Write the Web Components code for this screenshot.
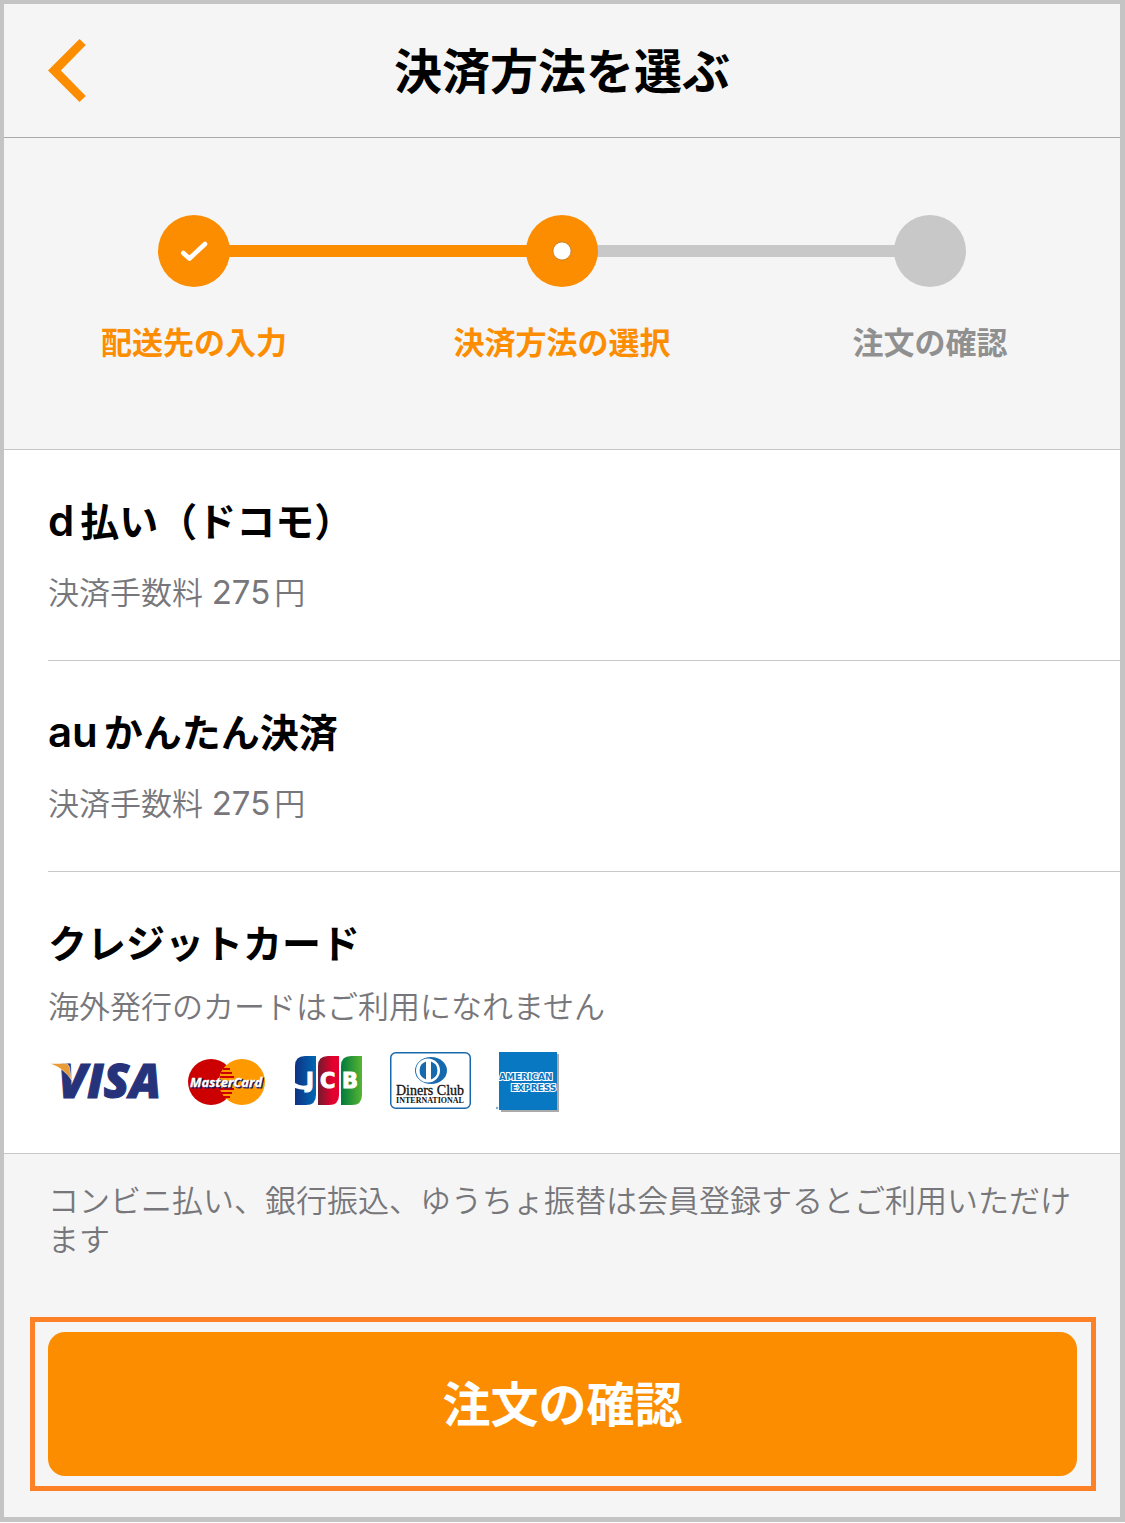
<!DOCTYPE html>
<html lang="ja">
<head>
<meta charset="utf-8">
<meta name="viewport" content="width=device-width, initial-scale=1">
<title>決済方法を選ぶ</title>
<style>
  :root {
    --accent: #fd8d00;
    --inactive: #c8c8c8;
    --surface: #f5f5f5;
    --line: #c8c8c8;
    --muted: #77777b;
  }

  body {
    margin: 0;
    background: #fff;
    color: #000;
    font-family: Inter, "Noto Sans CJK JP", sans-serif;
  }

  /* Latin runs are set a little larger than the kanji around them */
  .latin {
    margin-right: 6px;
    font-size: 42px;
    line-height: 1;
  }

  [slot="note"] .latin {
    margin-right: 4px;
    font-size: 33px;
    font-weight: 400;
  }
</style>
</head>
<body>

<checkout-page>
  <page-header slot="header" href="#back">決済方法を選ぶ</page-header>

  <step-list slot="steps">
    <step-item state="done">配送先の入力</step-item>
    <step-item state="current">決済方法の選択</step-item>
    <step-item state="todo">注文の確認</step-item>
  </step-list>

  <payment-method href="#dpay">
    <span class="latin">d</span>払い（ドコモ）
    <span slot="note">決済手数料 <span class="latin">275</span>円</span>
  </payment-method>
  <payment-method href="#au">
    <span class="latin">au</span>かんたん決済
    <span slot="note">決済手数料 <span class="latin">275</span>円</span>
  </payment-method>
  <payment-method href="#card" compact>
    クレジットカード
    <span slot="note">海外発行のカードはご利用になれません</span>
    <card-brands slot="brands"></card-brands>
  </payment-method>

  <span slot="hint">コンビニ払い、銀行振込、ゆうちょ振替は会員登録するとご利用いただけます</span>
  <submit-button slot="action">注文の確認</submit-button>
</checkout-page>

<template id="checkout-page">
  <style>
    :host {
      display: block;
      border: solid #c4c4c4;
      border-width: 4px 5px 5px 4px;
      background: var(--surface);
    }

    main {
      background: #fff;
      border: solid var(--line);
      border-width: 1px 0;
    }

    footer {
      padding: 27px 24px 26px 26px;
    }

    p {
      margin: 0 18px 58px;
      font-size: 31px;
      line-height: 39px;
      font-weight: 350;
      color: var(--muted);
    }
  </style>
  <slot name="header"></slot>
  <slot name="steps"></slot>
  <main><slot></slot></main>
  <footer>
    <p><slot name="hint"></slot></p>
    <slot name="action"></slot>
  </footer>
</template>

<template id="page-header">
  <style>
    :host {
      display: block;
      border-bottom: 1px solid #aaa;
    }

    header {
      display: grid;
      grid-template-columns: 40px 1fr 40px;
      align-items: center;
      height: 133px;
      padding: 0 43px;
    }

    a, svg {
      display: block;
    }

    h1 {
      margin: 0;
      padding-top: 2px;
      font-size: 48px;
      line-height: 64px;
      font-weight: 600;
      text-align: center;
    }
  </style>
  <header>
    <a aria-label="戻る">
      <svg width="40" height="64" viewBox="0 0 40 64">
        <path d="M1 31.500 32.500 0 38.800 6 13.800 31.500 38.800 57 32.500 63Z" fill="#fd8d00"/>
      </svg>
    </a>
    <h1><slot></slot></h1>
  </header>
</template>

<template id="step-list">
  <style>
    :host {
      display: grid;
      grid-template-columns: repeat(3, 1fr);
      padding: 77px 6px 86px;
    }
  </style>
  <slot></slot>
</template>

<template id="step-item">
  <style>
    :host {
      display: block;
      color: var(--accent);
    }

    :host([state="todo"]) {
      color: #909090;
    }

    .track {
      display: flex;
      align-items: center;
    }

    .track i {
      flex: 1;
      height: 12px;
      background: var(--accent);
    }

    .before {
      margin-right: -1px;
    }

    .after {
      margin-left: -1px;
    }

    :host(:first-child) .before,
    :host(:last-child) .after {
      visibility: hidden;
    }

    :host([state="current"]) .after,
    :host([state="todo"]) .before {
      background: var(--inactive);
    }

    .dot {
      display: grid;
      place-items: center;
      width: 72px;
      height: 72px;
      border-radius: 50%;
      background: var(--accent);
      z-index: 1;
    }

    :host([state="todo"]) .dot {
      background: var(--inactive);
    }

    svg {
      display: none;
    }

    :host([state="done"]) .check,
    :host([state="current"]) .bullet {
      display: block;
    }

    .label {
      margin-top: 36px;
      font-size: 31px;
      line-height: 40px;
      font-weight: 600;
      text-align: center;
    }
  </style>
  <div class="track">
    <i class="before"></i>
    <span class="dot">
      <svg class="check" width="28" height="22" viewBox="0 0 28 22">
        <path d="M3.300 13 9.500 18.500 25 4" fill="none" stroke="#fff" stroke-width="4.600" stroke-linecap="round" stroke-linejoin="round"/>
      </svg>
      <svg class="bullet" width="20" height="20" viewBox="0 0 20 20">
        <circle cx="10" cy="10" r="9" fill="#fff" stroke="#a96512" stroke-width=".6"/>
      </svg>
    </span>
    <i class="after"></i>
  </div>
  <div class="label"><slot></slot></div>
</template>

<template id="payment-method">
  <style>
    :host {
      display: block;
      margin-left: 44px;
      border-bottom: 1px solid var(--line);
    }

    :host([compact]) {
      border-bottom: 0;
    }

    a {
      display: block;
      padding: 48px 0 47px;
      color: inherit;
      text-decoration: none;
    }

    h2 {
      margin: 0 0 27px;
      font-size: 39px;
      line-height: 48px;
      font-weight: 600;
    }

    p {
      margin: 0;
      font-size: 31px;
      line-height: 40px;
      font-weight: 350;
      color: var(--muted);
    }

    :host([compact]) a {
      padding-bottom: 41px;
    }

    :host([compact]) h2 {
      margin-bottom: 19px;
    }
  </style>
  <a>
    <h2><slot></slot></h2>
    <p><slot name="note"></slot></p>
    <slot name="brands"></slot>
  </a>
</template>

<template id="card-brands">
  <style>
    :host {
      display: flex;
      gap: 28px;
      margin-top: 25px;
    }

    svg {
      display: block;
      overflow: visible;
    }
  </style>

  <svg width="112" height="60" viewBox="0 0 112 60" role="img" aria-label="VISA">
    <text x="10" y="46" font-family="Open Sans" font-size="47" font-weight="800" font-style="italic" fill="#26337a" stroke="#26337a">VISA</text>
    <path d="M2 11.500H17Q21 11.500 21.500 16L23.500 28Q17 17 2 11.500Z" fill="#e89a34" stroke="#fff" stroke-width=".5"/>
  </svg>

  <svg width="79" height="60" viewBox="0 0 79 60" role="img" aria-label="MasterCard">
    <circle cx="23" cy="30" r="23" fill="#c00"/>
    <circle cx="54" cy="30" r="23" fill="#f90"/>
    <path d="M38.500 13Q31 20 31 30T38.500 47Q46 40 46 30T38.500 13Z" fill="#f90"/>
    <path d="M35 17H42M33 21H44M32 25H46M32 37H46M33 41H44M35 45H42" stroke="#c00" stroke-width="2"/>
    <g font-family="Liberation Sans Narrow, Open Sans" font-size="13" font-weight="700" font-style="italic">
      <text x="3" y="36" fill="#1a1a5e" stroke="#1a1a5e" aria-hidden="true">MasterCard</text>
      <text x="2" y="35" fill="#fff" stroke="#fff" stroke-width=".3">MasterCard</text>
    </g>
  </svg>

  <svg width="67" height="60" viewBox="0 0 67 60" role="img" aria-label="JCB">
    <defs>
      <linearGradient id="blue"><stop stop-color="#0f3285"/><stop offset="1" stop-color="#0068b3"/></linearGradient>
      <linearGradient id="red"><stop stop-color="#701b2c"/><stop offset=".7" stop-color="#e4002f"/></linearGradient>
      <linearGradient id="green"><stop stop-color="#007b3d"/><stop offset="1" stop-color="#57b531"/></linearGradient>
    </defs>
    <path d="M10 4H21V43Q21 53 11 53H0V14Q0 4 10 4Z" fill="url(#blue)"/>
    <path d="M33 4H44V43Q44 53 34 53H23V14Q23 4 33 4Z" fill="url(#red)"/>
    <path d="M56 4H67V43Q67 53 57 53H46V14Q46 4 56 4Z" fill="url(#green)"/>
    <g font-family="DejaVu Sans" font-size="21" font-weight="700" fill="#fff" stroke="#fff">
      <text x="11" y="36">J</text>
      <text x="25" y="36">C</text>
      <text x="47" y="36">B</text>
    </g>
    <path d="M0 31Q6 35 13 33L15 37Q8 39 0 36Z" fill="#fff"/>
  </svg>

  <svg width="81" height="60" viewBox="0 0 81 60" role="img" aria-label="Diners Club International">
    <rect x=".75" y=".75" width="79.500" height="55.500" rx="5" fill="#fff" stroke="#1769ae" stroke-width="1.500"/>
    <ellipse cx="41" cy="18.500" rx="16" ry="13.500" fill="#1769ae"/>
    <circle cx="38" cy="18.500" r="12" fill="#fff"/>
    <path d="M36 9.500A9.500 9.500 0 0 0 36 27.500ZM41 9.500A9.500 9.500 0 0 1 41 27.500Z" fill="#1769ae"/>
    <g font-family="Liberation Serif" fill="#111" text-anchor="middle">
      <text x="40" y="43" font-size="14" stroke="#111" stroke-width=".3">Diners Club</text>
      <text x="40" y="51" font-size="8" font-weight="700">INTERNATIONAL</text>
    </g>
  </svg>

  <svg width="61" height="60" viewBox="0 0 61 60" role="img" aria-label="American Express">
    <path d="M2 2H60V60H2Z" fill="#aaa"/>
    <path d="M0 0H58V58H0Z" fill="#0878c3"/>
    <circle cx="-2" cy="56" r="1.200" fill="#7aaed4"/>
    <g font-family="DejaVu Sans" font-size="9" font-weight="700" fill="#0878c3" stroke="#fff" stroke-width="2" paint-order="stroke">
      <text x="0" y="28">AMERICAN</text>
      <text x="12" y="39">EXPRESS</text>
    </g>
  </svg>
</template>

<template id="submit-button">
  <style>
    :host {
      display: block;
      padding: 10px 14px 10px 13px;
      border: 5px solid #ff8127;
    }

    button {
      display: block;
      width: 100%;
      height: 144px;
      padding: 2px 0 0;
      border: 0;
      border-radius: 17px;
      background: var(--accent);
      color: #fff;
      font: inherit;
      font-size: 48px;
      line-height: 64px;
      font-weight: 600;
      cursor: pointer;
    }
  </style>
  <button type="button"><slot></slot></button>
</template>

<script>
  // Clones the <template> whose id is the element's own name
  class TemplateElement extends HTMLElement {
    constructor() {
      super();

      const template = document.getElementById(this.localName);
      this.attachShadow({ mode: 'open' });
      this.shadowRoot.appendChild(document.importNode(template.content, true));
    }
  }

  // Passes the host's href on to the link inside
  class LinkElement extends TemplateElement {
    static get observedAttributes() {
      return ['href'];
    }

    attributeChangedCallback(name, oldValue, newValue) {
      this.shadowRoot.querySelector('a').setAttribute('href', newValue);
    }
  }

  class StepItem extends TemplateElement {
    connectedCallback() {
      this.setAttribute('role', 'listitem');
      if (this.getAttribute('state') === 'current') {
        this.setAttribute('aria-current', 'step');
      }
    }
  }

  class StepList extends TemplateElement {
    connectedCallback() {
      this.setAttribute('role', 'list');
    }
  }

  customElements.define('checkout-page', class extends TemplateElement {});
  customElements.define('page-header', class extends LinkElement {});
  customElements.define('step-list', StepList);
  customElements.define('step-item', StepItem);
  customElements.define('payment-method', class extends LinkElement {});
  customElements.define('card-brands', class extends TemplateElement {});
  customElements.define('submit-button', class extends TemplateElement {});
</script>
</body>
</html>
